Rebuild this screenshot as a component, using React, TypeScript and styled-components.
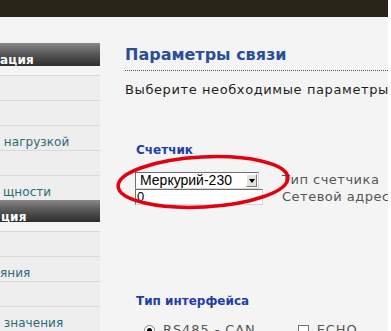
import React from 'react';
import styled, { createGlobalStyle } from 'styled-components';

const Global = createGlobalStyle`
  html, body { margin: 0; padding: 0; background: #ffffff; overflow: hidden; }
  body { font-family: "DejaVu Sans", Verdana, sans-serif; }
`;

const Page = styled.div`
  width: 391px;
  height: 331px;
  display: flex;
  overflow: hidden;
  background: #ffffff;
`;

const Frame = styled.div`
  width: 388px;
  display: flex;
  flex-direction: column;
`;

const TopBar = styled.div`
  height: 17px;
  background: #2a2519;
  flex: none;
`;

const Body = styled.div`
  flex: 1;
  display: flex;
  background: #f4f4f4;
  min-height: 0;
`;

const Sidebar = styled.nav`
  width: 100px;
  flex: none;
  padding-top: 26px;
  display: flex;
  flex-direction: column;
`;

const SideHeader = styled.div<{ $indent?: number }>`
  height: 25px;
  box-sizing: border-box;
  padding: 10px 0 0 ${p => p.$indent ?? 0}px;
  background: linear-gradient(#8a8888, #5a5959 45%, #2f2e2e);
  color: #ffffff;
  font-weight: bold;
  font-size: 12px;
  line-height: 14px;
  letter-spacing: 0.2px;
  white-space: nowrap;
  overflow: hidden;
`;

const SideList = styled.ul`
  list-style: none;
  margin: 0;
  padding: 9px 0 0 0;
`;

const SideItem = styled.li<{ $indent?: number }>`
  height: 25px;
  box-sizing: border-box;
  border-top: 1px solid #d9d9d9;
  background: #eeeeee;
  padding: 9px 0 0 ${p => p.$indent ?? 0}px;
  color: #2a6c76;
  font-size: 12px;
  line-height: 14px;
  letter-spacing: 0.05px;
  white-space: nowrap;
  overflow: hidden;
`;

const Content = styled.main`
  flex: 1;
  min-width: 0;
  padding: 28px 0 0 25px;
  overflow: hidden;
`;

const Title = styled.h1`
  margin: 0;
  font-size: 16px;
  line-height: 20px;
  font-weight: bold;
  color: #2b4e98;
  padding-bottom: 5px;
  border-bottom: 1px dotted #555555;
  white-space: nowrap;
`;

const Desc = styled.p`
  margin: 11px 0 0 0;
  font-size: 13px;
  line-height: 16px;
  letter-spacing: 0.6px;
  color: #1e1e1e;
  white-space: nowrap;
`;

const Section = styled.section<{ $top: number }>`
  position: relative;
  margin-top: ${p => p.$top}px;
  padding-left: 11px;
`;

const SectionTitle = styled.h2`
  margin: 0;
  font-size: 12px;
  line-height: 15px;
  font-weight: bold;
  color: #1f3ea4;
`;

const FormGrid = styled.div`
  margin: 14px 0 0 -1px;
  display: grid;
  grid-template-columns: 147px auto;
  grid-auto-rows: 17px 16px;
`;

const SelectBox = styled.div`
  width: 124px;
  height: 17px;
  box-sizing: border-box;
  border-top: 1px solid #6f6f6f;
  border-left: 1px solid #6f6f6f;
  border-right: 1px solid #d8d8d8;
  border-bottom: 1px solid #d8d8d8;
  background: #ffffff;
  display: flex;
  align-items: center;
  font-family: "Liberation Sans", Arial, sans-serif;
  font-size: 14px;
  color: #000000;
`;

const SelectText = styled.span`
  flex: 1;
  padding-left: 4px;
  line-height: 15px;
  white-space: nowrap;
`;

const SelectButton = styled.span`
  width: 11px;
  height: 13px;
  margin-right: 1px;
  box-sizing: border-box;
  background: #e4e2dc;
  border-top: 1px solid #ffffff;
  border-left: 1px solid #ffffff;
  border-right: 1px solid #7a7a7a;
  border-bottom: 1px solid #7a7a7a;
  display: flex;
  align-items: center;
  justify-content: center;
`;

const Arrow = styled.span`
  width: 0;
  height: 0;
  border-left: 3px solid transparent;
  border-right: 3px solid transparent;
  border-top: 4px solid #000000;
`;

const TextInput = styled.div`
  width: 128px;
  height: 16px;
  box-sizing: border-box;
  border-top: 1px solid #6f6f6f;
  border-left: 1px solid #6f6f6f;
  border-right: 1px solid #d8d8d8;
  border-bottom: 1px solid #d8d8d8;
  background: #ffffff;
  font-family: "Liberation Sans", Arial, sans-serif;
  font-size: 13px;
  line-height: 14px;
  padding-left: 1px;
  color: #000000;
`;

const FieldLabel = styled.span`
  font-size: 13px;
  line-height: 16px;
  letter-spacing: 0.5px;
  color: #555555;
  white-space: nowrap;
`;

const Annotation = styled.svg`
  position: absolute;
  left: -12px;
  top: 9px;
  overflow: visible;
  pointer-events: none;
`;

const Options = styled.div`
  margin-top: 13px;
  padding-left: 8px;
  display: flex;
  align-items: center;
  gap: 8px;
`;

const Radio = styled.span`
  width: 11px;
  height: 11px;
  box-sizing: border-box;
  border-radius: 50%;
  border: 1px solid #808080;
  background: #ffffff;
  display: flex;
  align-items: center;
  justify-content: center;
  &::after {
    content: '';
    width: 5px;
    height: 5px;
    border-radius: 50%;
    background: #000000;
  }
`;

const Check = styled.span`
  width: 11px;
  height: 11px;
  box-sizing: border-box;
  border: 1px solid #707070;
  background: #ffffff;
  margin-left: 34px;
`;

const OptionText = styled.span`
  font-size: 13px;
  line-height: 16px;
  letter-spacing: 0.9px;
  color: #555555;
  white-space: nowrap;
`;

const RightGap = styled.div`
  flex: 1;
  background: #ffffff;
`;

export default function App() {
  return (
    <>
      <Global />
      <Page>
        <Frame>
          <TopBar />
          <Body>
            <Sidebar>
              <SideHeader $indent={0}>ация</SideHeader>
              <SideList>
                <SideItem />
                <SideItem />
                <SideItem $indent={0}>&nbsp;нагрузкой</SideItem>
                <SideItem />
                <SideItem $indent={3}>щности</SideItem>
              </SideList>
              <SideHeader $indent={1}>ция</SideHeader>
              <SideList>
                <SideItem />
                <SideItem $indent={0}>яния</SideItem>
                <SideItem />
                <SideItem $indent={0}>&nbsp;значения</SideItem>
              </SideList>
            </Sidebar>
            <Content>
              <Title>Параметры связи</Title>
              <Desc>Выберите необходимые параметры связи</Desc>
              <Section $top={45}>
                <SectionTitle>Счетчик</SectionTitle>
                <FormGrid>
                  <SelectBox>
                    <SelectText>Меркурий-230</SelectText>
                    <SelectButton><Arrow /></SelectButton>
                  </SelectBox>
                  <FieldLabel>Тип счетчика</FieldLabel>
                  <TextInput>0</TextInput>
                  <FieldLabel>Сетевой адрес</FieldLabel>
                </FormGrid>
                <Annotation width="180" height="60" viewBox="0 0 180 60">
                  <ellipse cx="90" cy="30" rx="85" ry="25" fill="none" stroke="#e4000f" strokeWidth="3.5" transform="rotate(-3 90 30)" />
                </Annotation>
              </Section>
              <Section $top={89}>
                <SectionTitle>Тип интерфейса</SectionTitle>
                <Options>
                  <Radio />
                  <OptionText>RS485 - CAN</OptionText>
                  <Check />
                  <OptionText>ECHO</OptionText>
                </Options>
              </Section>
            </Content>
          </Body>
        </Frame>
        <RightGap />
      </Page>
    </>
  );
}
